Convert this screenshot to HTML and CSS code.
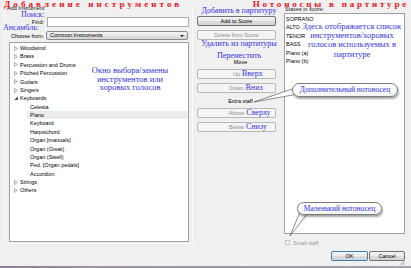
FILE: index.html
```html
<!DOCTYPE html>
<html lang="ru">
<head>
  <meta charset="UTF-8" />
  <title>Add Instrument</title>
  <link rel="stylesheet" href="styles.css">
</head>
<body>

  <div class="dialog">

    <!-- левая часть: выбор инструментов -->
    <div class="group">
      <div class="legend">Add Instrument</div>
      <div class="field-row find-row">
        <label class="field-label">Find:</label>
        <input class="textbox" type="text">
      </div>
      <div class="field-row choose-row">
        <label class="field-label">Choose from:</label>
        <div class="combo">
          <span>Common Instruments</span>
          <span class="combo-arrow"></span>
        </div>
      </div>
      <div class="tree">
        <div class="tree-row"><svg class="caret" width="4" height="5"><path d="M0.5 0.5 L3.5 2.5 L0.5 4.5 Z" fill="none" stroke="#9a9a9a" stroke-width="0.8"/></svg>Woodwind</div>
        <div class="tree-row"><svg class="caret" width="4" height="5"><path d="M0.5 0.5 L3.5 2.5 L0.5 4.5 Z" fill="none" stroke="#9a9a9a" stroke-width="0.8"/></svg>Brass</div>
        <div class="tree-row"><svg class="caret" width="4" height="5"><path d="M0.5 0.5 L3.5 2.5 L0.5 4.5 Z" fill="none" stroke="#9a9a9a" stroke-width="0.8"/></svg>Percussion and Drums</div>
        <div class="tree-row"><svg class="caret" width="4" height="5"><path d="M0.5 0.5 L3.5 2.5 L0.5 4.5 Z" fill="none" stroke="#9a9a9a" stroke-width="0.8"/></svg>Pitched Percussion</div>
        <div class="tree-row"><svg class="caret" width="4" height="5"><path d="M0.5 0.5 L3.5 2.5 L0.5 4.5 Z" fill="none" stroke="#9a9a9a" stroke-width="0.8"/></svg>Guitars</div>
        <div class="tree-row"><svg class="caret" width="4" height="5"><path d="M0.5 0.5 L3.5 2.5 L0.5 4.5 Z" fill="none" stroke="#9a9a9a" stroke-width="0.8"/></svg>Singers</div>
        <div class="tree-row"><svg class="caret" width="4" height="5"><path d="M3.8 0.6 L3.8 4 L0.4 4 Z" fill="#404040"/></svg>Keyboards</div>
        <div class="tree-row child">Celesta</div>
        <div class="tree-row child selected"><span>Piano</span></div>
        <div class="tree-row child">Keyboard</div>
        <div class="tree-row child">Harpsichord</div>
        <div class="tree-row child">Organ [manuals]</div>
        <div class="tree-row child">Organ (Great)</div>
        <div class="tree-row child">Organ (Swell)</div>
        <div class="tree-row child">Ped. [Organ pedals]</div>
        <div class="tree-row child">Accordion</div>
        <div class="tree-row"><svg class="caret" width="4" height="5"><path d="M0.5 0.5 L3.5 2.5 L0.5 4.5 Z" fill="none" stroke="#9a9a9a" stroke-width="0.8"/></svg>Strings</div>
        <div class="tree-row"><svg class="caret" width="4" height="5"><path d="M0.5 0.5 L3.5 2.5 L0.5 4.5 Z" fill="none" stroke="#9a9a9a" stroke-width="0.8"/></svg>Others</div>
      </div>
    </div>

    <!-- средняя часть: кнопки -->
    <div class="actions">
      <button class="btn btn-add">Add to Score</button>
      <button class="btn btn-delete" disabled>Delete from Score</button>
      <div class="caption caption-move">Move</div>
      <button class="btn btn-up" disabled><span class="lbl">Up<span class="ru">Вверх</span></span></button>
      <button class="btn btn-down" disabled><span class="lbl">Down<span class="ru">Вниз</span></span></button>
      <div class="caption caption-extra">Extra staff</div>
      <button class="btn btn-above" disabled><span class="lbl">Above<span class="ru">Сверху</span></span></button>
      <button class="btn btn-below" disabled><span class="lbl">Below<span class="ru">Снизу</span></span></button>
    </div>

    <!-- правая часть: нотоносцы в партитуре -->
    <div class="staves">
      <div class="staves-label">Staves in score:</div>
      <div class="staves-list">
        <div class="staff-row">SOPRANO</div>
        <div class="staff-row">ALTO</div>
        <div class="staff-row">TENOR</div>
        <div class="staff-row">BASS</div>
        <div class="staff-row">Piano (a)</div>
        <div class="staff-row">Piano (b)</div>
      </div>
      <label class="check-row"><span class="check-box"></span>Small staff</label>
      <div class="dialog-buttons">
        <button class="btn btn-ok">OK</button>
        <button class="btn btn-cancel">Cancel</button>
      </div>
      <div class="grip"></div>
    </div>

  </div>
  <div class="statusbar"></div>

  <!-- подписи поверх скриншота -->
  <div class="notes">
    <div class="title title-left">Добавление инструментов</div>
    <div class="title title-right">Нотоносцы в партитуре</div>
    <div class="note note-find">Поиск:</div>
    <div class="note note-ensemble">Ансамбль:</div>
    <div class="note note-tree">Окно выбора/замены<br>инструментов или<br>хоровых голосов</div>
    <div class="note note-add">Добавить в партитуру</div>
    <div class="note note-delete">Удалить из партитуры</div>
    <div class="note note-move">Переместить</div>
    <div class="note note-staves">Здесь отображается список<br>инструментов/хоровых<br>голосов используемых в<br>партитуре</div>

    <svg class="tails" width="411" height="268">
      <polygon points="292,89 298,94 254,102" fill="#fff" stroke="#5a5a5a" stroke-width="0.7"/>
      <polygon points="300,212 308,213 290,236" fill="#fff" stroke="#5a5a5a" stroke-width="0.7"/>
    </svg>
    <div class="bubble bubble-extra">Дополнительный нотоносец</div>
    <div class="bubble bubble-small">Маленький нотоносец</div>
  </div>

</body>
</html>
```

FILE: styles.css
```css
body {
  margin: 0;
  width: 411px;
  height: 268px;
  overflow: hidden;
  position: relative;
  background: #f0f0f0;
  font-family: 'Liberation Sans', Arial, sans-serif;
  font-size: 5.5px;
  color: #000;
}

.dialog {
  height: 266px;
  display: flex;
  padding-left: 4px;
  box-sizing: border-box;
}

.statusbar {
  height: 2px;
  background: linear-gradient(90deg, #8a7d96 0, #9b93a4 25%, #9c9ea6 60%, #a3a5ab);
}

/* левая группа */
.group {
  margin-top: 5px;
  width: 189px;
  height: 239px;
  box-sizing: border-box;
  border-left: 1px solid #fbfbfb;
  border-right: 1px solid #fbfbfb;
  border-bottom: 1px solid #fbfbfb;
  display: flex;
  flex-direction: column;
}

.legend {
  height: 7px;
  line-height: 7px;
  padding-left: 2px;
  color: #222;
}

.field-row {
  display: flex;
  align-items: center;
}

.find-row {
  margin-top: 5px;
  height: 10px;
}

.choose-row {
  margin-top: 4px;
  height: 9px;
}

.field-label {
  width: 40px;
  text-align: right;
  padding-right: 1px;
  box-sizing: border-box;
}

.textbox {
  margin: 0 0 0 2px;
  padding: 0;
  width: 142px;
  height: 10px;
  box-sizing: border-box;
  border: 1px solid #abadb3;
  background: #fff;
}

.combo {
  margin-left: 1px;
  width: 142px;
  height: 9px;
  box-sizing: border-box;
  border: 1px solid #8a8a8a;
  border-radius: 2px;
  background: linear-gradient(#f2f2f2, #e6e6e6 50%, #dcdcdc 51%, #d6d6d6);
  display: flex;
  align-items: center;
  justify-content: space-between;
  padding: 0 3px 0 3px;
  line-height: 7px;
}

.combo-arrow {
  width: 0;
  height: 0;
  border-left: 2px solid transparent;
  border-right: 2px solid transparent;
  border-top: 2.5px solid #222;
}

.tree {
  margin-top: 2px;
  margin-left: 4px;
  width: 180px;
  height: 200px;
  box-sizing: border-box;
  border: 1px solid #a0a0a0;
  background: #fff;
  padding-top: 1px;
}

.tree-row {
  height: 8.38px;
  line-height: 8.38px;
  display: flex;
  align-items: center;
  padding-left: 4px;
  white-space: nowrap;
}

.caret {
  width: 4px;
  height: 5px;
  margin-right: 2px;
  flex-shrink: 0;
}

.tree-row.child {
  padding-left: 20px;
}

.tree-row.selected {
  padding-left: 17px;
}

.tree-row.selected span {
  flex: 1;
  padding-left: 3px;
  background: #ececec;
}

/* средняя колонка */
.actions {
  width: 87px;
  padding-left: 4px;
  box-sizing: border-box;
  display: flex;
  flex-direction: column;
}

.btn {
  width: 79px;
  height: 10px;
  box-sizing: border-box;
  padding: 0;
  margin: 0;
  border: 1px solid #707070;
  border-radius: 2px;
  background: linear-gradient(#f3f3f3, #ebebeb 50%, #dddddd 51%, #d3d3d3);
  font-family: 'Liberation Sans', Arial, sans-serif;
  font-size: 5.5px;
  line-height: 8px;
  color: #000;
  text-align: center;
}

.btn:disabled {
  border-color: #b5b9bb;
  background: #f4f4f4;
  color: #8d8d8d;
}

.btn-add { margin-top: 16px; }
.btn-delete { margin-top: 4px; }
.btn-up { margin-top: 3px; }
.btn-down { margin-top: 4px; }
.btn-above { margin-top: 3px; }
.btn-below { margin-top: 4px; }

.caption {
  height: 8px;
  line-height: 8px;
  text-align: center;
  padding-left: 4px;
}

.caption-move { margin-top: 18px; width: 79px; }
.caption-extra { margin-top: 4px; width: 79px; }

.lbl {
  position: relative;
}

.ru {
  position: absolute;
  left: 100%;
  top: -1px;
  margin-left: 2px;
  font-family: 'Liberation Serif', 'Times New Roman', serif;
  font-size: 8px;
  color: #3232e0;
  white-space: nowrap;
}

/* правая колонка */
.staves {
  width: 127px;
  padding-left: 0;
  display: flex;
  flex-direction: column;
  position: relative;
}

.staves-label {
  margin-top: 6px;
  height: 7px;
  line-height: 7px;
  padding-left: 5px;
  color: #222;
}

.staves-list {
  margin-left: 4px;
  width: 121px;
  height: 221px;
  box-sizing: border-box;
  border: 1px solid #a0a0a0;
  background: #fff;
  padding: 1px 0 0 1px;
}

.staff-row {
  height: 8.4px;
  line-height: 8.4px;
}

.check-row {
  margin-top: 6px;
  margin-left: 5px;
  height: 5px;
  display: flex;
  align-items: center;
  color: #9a9a9a;
}

.check-box {
  width: 5px;
  height: 5px;
  box-sizing: border-box;
  border: 1px solid #c4c4c4;
  background: #f6f6f6;
  margin-right: 3px;
}

.dialog-buttons {
  margin-top: 6px;
  display: flex;
  justify-content: flex-end;
  gap: 1px;
  width: 125px;
}

.btn-ok {
  width: 37px;
  border-color: #3c7fb1;
}

.btn-cancel {
  width: 36px;
}

.grip {
  position: absolute;
  right: 2px;
  bottom: 1px;
  width: 6px;
  height: 6px;
  background: radial-gradient(circle, #a8a8a8 0.6px, transparent 0.8px) 0 0 / 2px 2px;
  clip-path: polygon(100% 0, 100% 100%, 0 100%);
}

/* подписи поверх */
.notes {
  position: absolute;
  left: 0;
  top: 0;
  width: 411px;
  height: 268px;
  pointer-events: none;
}

.title {
  position: absolute;
  top: 0;
  font-family: 'Liberation Serif', 'Times New Roman', serif;
  font-size: 9px;
  line-height: 9px;
  font-weight: bold;
  letter-spacing: 3.1px;
  color: #e8141c;
  white-space: nowrap;
}

.title-left { left: 4px; }
.title-right { right: 2px; letter-spacing: 2.8px; }

.note {
  position: absolute;
  font-family: 'Liberation Serif', 'Times New Roman', serif;
  font-size: 8px;
  line-height: 8px;
  color: #3232e0;
  white-space: nowrap;
}

.note-find { left: 21px; top: 11px; }
.note-ensemble { left: 3px; top: 24px; }

.note-tree {
  left: 80px;
  top: 66px;
  width: 100px;
  text-align: center;
  font-size: 8.5px;
  line-height: 8.6px;
}

.note-add, .note-delete, .note-move {
  left: 189px;
  width: 100px;
  text-align: center;
}

.note-add { top: 7px; }
.note-delete { top: 40px; }
.note-move { top: 52px; }

.note-staves {
  left: 302px;
  top: 22px;
  width: 100px;
  text-align: center;
  font-size: 8.5px;
  line-height: 9.2px;
}

.tails {
  position: absolute;
  left: 0;
  top: 0;
}

.bubble {
  position: absolute;
  box-sizing: border-box;
  border: 1px solid #7a7a7a;
  border-radius: 7px;
  background: linear-gradient(#ffffff, #f4f4f4);
  box-shadow: 1px 2px 2px rgba(0, 0, 0, 0.35);
  font-family: 'Liberation Serif', 'Times New Roman', serif;
  font-size: 7.5px;
  color: #3232e0;
  text-align: center;
  white-space: nowrap;
}

.bubble-extra {
  left: 292px;
  top: 83px;
  width: 106px;
  height: 14px;
  line-height: 12px;
}

.bubble-small {
  left: 297px;
  top: 202px;
  width: 85px;
  height: 13px;
  line-height: 11px;
}
```
